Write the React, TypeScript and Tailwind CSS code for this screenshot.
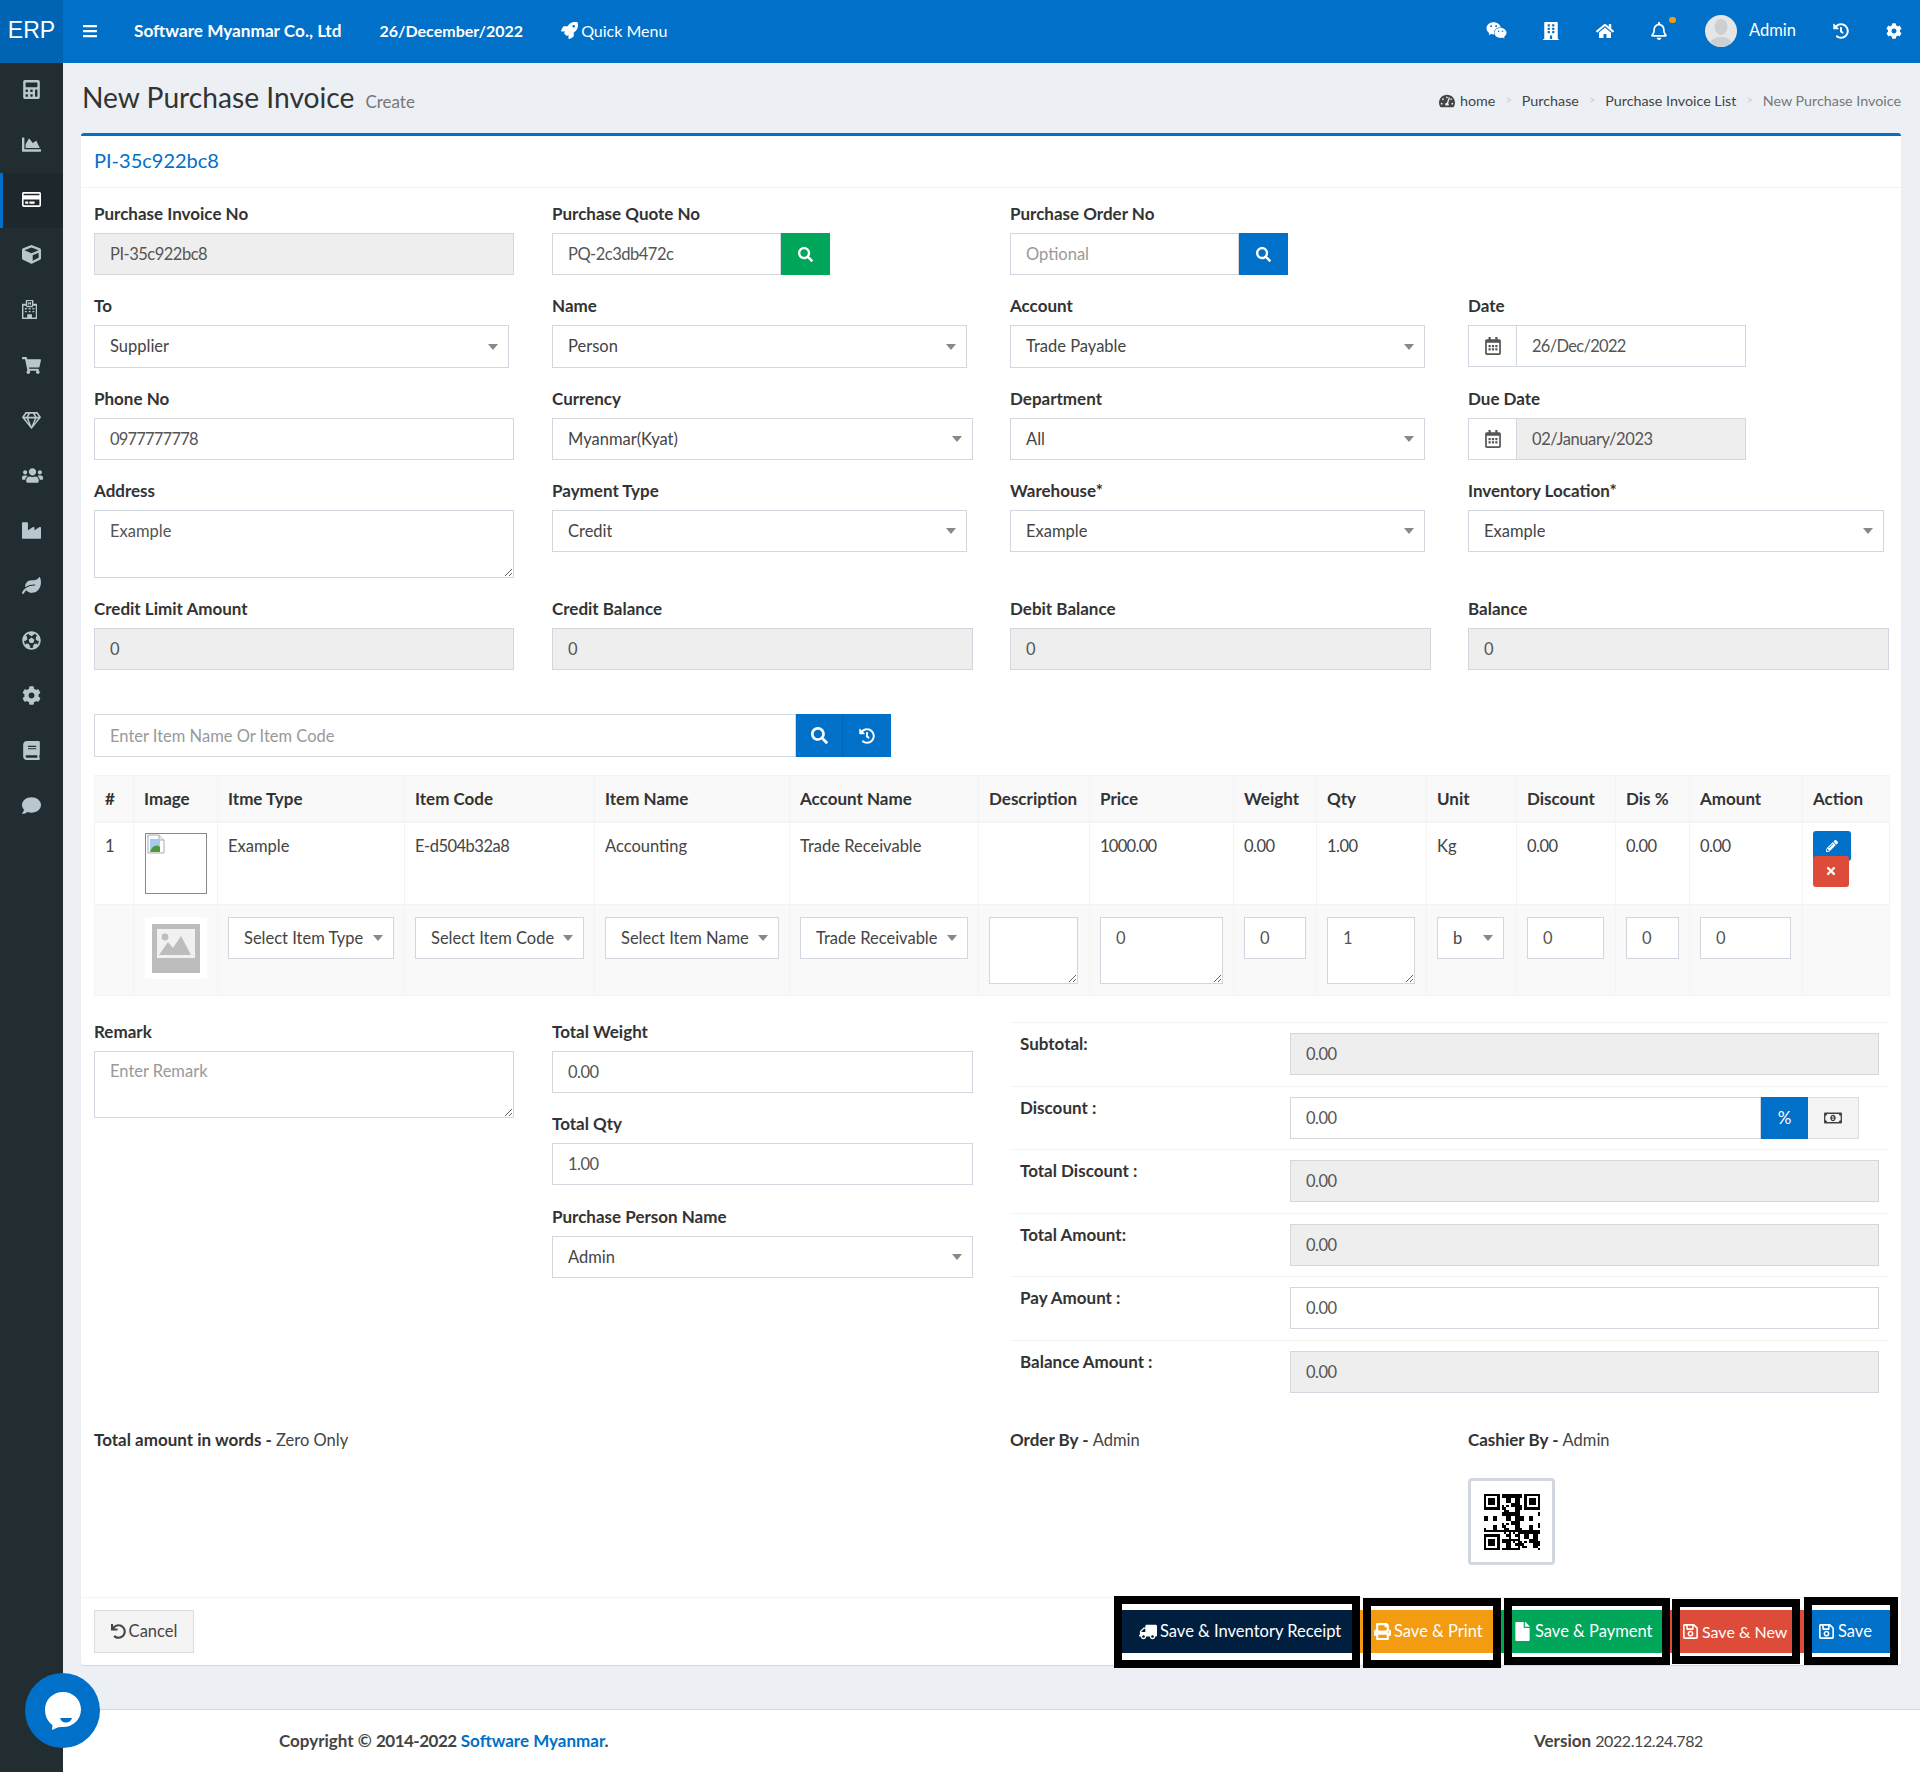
import type { ReactNode } from 'react';
import {
    FaBars, FaBook, FaBuilding, FaCalculator, FaChartArea, FaCog, FaComment, FaCube, FaFile, FaFutbol, FaHistory,
    FaHome, FaIndustry, FaLeaf, FaPencilAlt, FaPrint, FaRegBell, FaRegCalendarAlt, FaRegCreditCard, FaRegGem,
    FaRegMoneyBillAlt, FaRegSave, FaRocket, FaSearch, FaShoppingCart, FaTachometerAlt, FaTimes, FaTruck, FaUndo, FaUsers, FaWeixin,
} from 'react-icons/fa';

function HospitalIcon({ size = 19 }: { size?: number }) {
    return (
        <svg viewBox="0 0 16 20" height={size} width={size * 0.8} fill="currentColor">
            <path d="M4 0h8v4h4v16H0V4h4zm1.500 1v5h5V1zM1.500 6v12.500h4V15h5v3.500h4V6h-3v1.500h-7V6z" fillRule="evenodd" />
            <path d="M6.500 2h1v1h1V2h1v3h-1V4h-1v1h-1z" />
            <path d="M3 8.500h2V10H3zm4 0h2V10H7zm4 0h2V10h-2zM3 11.500h2V13H3zm4 0h2V13H7zm4 0h2V13h-2z" />
        </svg>
    );
}

const sideIcons = [
    FaCalculator, FaChartArea, FaRegCreditCard, FaCube, HospitalIcon, FaShoppingCart, FaRegGem,
    FaUsers, FaIndustry, FaLeaf, FaFutbol, FaCog, FaBook, FaComment,
];

// digits in Lato run wider than the reference's face, pull numeric strings in a little
const tight = 'tracking-[-0.5px]';

function Label({ children }: { children: ReactNode }) {
    return <label className="mb-[8px] block h-[22px] text-[17px] font-bold leading-[22px] text-[#333]">{children}</label>;
}

function Input({ value, placeholder, gray, className = '' }: { value?: string; placeholder?: string; gray?: boolean; className?: string }) {
    return (
        <input
            readOnly
            value={value ?? ''}
            placeholder={placeholder}
            className={`block h-[42px] border border-[#d2d6de] px-[15px] text-[16.5px] text-[#555] outline-none placeholder:text-[#999] ${gray ? 'bg-[#eee]' : 'bg-white'} ${className}`}
        />
    );
}

function Area({ value, placeholder, className = '' }: { value?: string; placeholder?: string; className?: string }) {
    return (
        <textarea
            readOnly
            value={value ?? ''}
            placeholder={placeholder}
            className={`block border border-[#d2d6de] bg-white px-[15px] py-[9px] text-[16.5px] leading-[22px] text-[#555] outline-none placeholder:text-[#999] ${className}`}
        />
    );
}

function Select({ value, className = '' }: { value: string; className?: string }) {
    return (
        <div className={`flex h-[42px] items-center justify-between border border-[#d2d6de] bg-white pl-[15px] pr-[10px] text-[16.5px] text-[#444] ${className}`}>
            <span className="truncate">{value}</span>
            <span className="h-0 w-0 shrink-0 border-x-[5px] border-t-[6px] border-x-transparent border-t-[#888]" />
        </div>
    );
}

function DateField({ value, gray, className = '' }: { value: string; gray?: boolean; className?: string }) {
    return (
        <div className="flex h-[42px] w-[278px]">
            <span className="flex w-[48px] items-center justify-center border border-r-0 border-[#d2d6de] bg-white text-[#555]">
                <FaRegCalendarAlt size={18} />
            </span>
            <Input value={value} gray={gray} className={`min-w-0 flex-1 ${className}`} />
        </div>
    );
}

function Lookup({ value, placeholder, color }: { value?: string; placeholder?: string; color: string }) {
    return (
        <div className="flex h-[42px] w-[278px]">
            <Input value={value} placeholder={placeholder} className={`min-w-0 flex-1 ${value ? tight : ''}`} />
            <button type="button" className={`flex w-[49px] items-center justify-center text-white ${color}`}>
                <FaSearch size={15} />
            </button>
        </div>
    );
}

function Th({ children }: { children?: ReactNode }) {
    return <th className="border border-[#f4f4f4] border-b-2 pl-[10px] text-left align-middle text-[17px] font-bold text-[#333]">{children}</th>;
}

function Td({ children, className = '' }: { children?: ReactNode; className?: string }) {
    return <td className={`border border-[#f4f4f4] pl-[10px] pt-[12px] align-top text-[16.5px] leading-[22px] text-[#444] ${className}`}>{children}</td>;
}

function TotalRow({ label, children }: { label: string; children: ReactNode }) {
    return (
        <div className="flex h-[63.5px] border-t border-[#f4f4f4] pl-[10px] pt-[10px]">
            <div className="w-[270px] text-[17px] font-bold leading-[22px] text-[#333]">{label}</div>
            {children}
        </div>
    );
}

const qrCells = Array.from({ length: 25 * 25 }, (_, i) => {
    const x = i % 25;
    const y = Math.floor(i / 25);
    const inFinder = (fx: number, fy: number) => x >= fx && x < fx + 7 && y >= fy && y < fy + 7;
    for (const [fx, fy] of [[0, 0], [18, 0], [0, 18]]) {
        if (inFinder(fx, fy)) {
            const dx = x - fx;
            const dy = y - fy;
            return dx === 0 || dy === 0 || dx === 6 || dy === 6 || (dx >= 2 && dx <= 4 && dy >= 2 && dy <= 4);
        }
    }
    if ((x < 8 && y < 8) || (x > 16 && y < 8) || (x < 8 && y > 16)) return false;
    return ((x * 7 + y * 13 + x * y * 5 + (x ^ y) * 3) % 5) < 2;
});

function QrCode() {
    return (
        <svg viewBox="0 0 25 25" className="h-[56px] w-[56px]" shapeRendering="crispEdges">
            {qrCells.map((on, i) => (on ? <rect key={i} x={i % 25} y={Math.floor(i / 25)} width="1" height="1" fill="#000" /> : null))}
        </svg>
    );
}

function SaveBox({ icon, label, boxClass, fill, strip }: { icon: ReactNode; label: string; boxClass: string; fill: string; strip?: string }) {
    return (
        <>
            {strip ? <span className={`mt-[12px] h-[43px] ${strip}`} /> : null}
            <div className={`border-[8px] border-black bg-white ${boxClass}`}>
                <button type="button" className={`flex h-[43px] w-full items-center justify-start gap-[3px] whitespace-nowrap text-[16.5px] text-white ${fill}`}>
                    {icon}
                    {label}
                </button>
            </div>
        </>
    );
}

export default function App() {
    return (
        <div className="relative flex min-h-[1772px] w-[1920px] flex-col overflow-hidden bg-[#ecf0f5] font-[Lato,sans-serif] text-[16px] text-[#333]">
            <header className="flex h-[63px] shrink-0 bg-[#0070c9] text-white">
                <div className="flex h-full w-[63px] items-center justify-center bg-[#0064b4] pb-[3px] font-['Liberation_Sans',sans-serif] text-[23px]">ERP</div>
                <div className="flex flex-1 items-center pb-[2px]">
                    <FaBars size={16} className="ml-[19px]" />
                    <span className="ml-[36px] text-[17.2px] font-bold">Software Myanmar Co., Ltd</span>
                    <span className="ml-[38px] font-bold">26/December/2022</span>
                    <FaRocket size={17} className="ml-[38px]" />
                    <span className="ml-[3px]">Quick Menu</span>
                    <div className="ml-auto flex items-center pr-[18px]">
                        <FaWeixin size={21} />
                        <FaBuilding size={18} className="ml-[35px]" />
                        <FaHome size={18} className="ml-[36px]" />
                        <span className="relative ml-[36px]">
                            <FaRegBell size={18} />
                            <span className="absolute left-[19px] top-[-5px] h-[6px] w-[7px] rounded-full bg-[#f39c12]" />
                        </span>
                        <span className="ml-[37px] h-[32px] w-[32px] overflow-hidden rounded-full bg-[#e4e6e8]">
                            <svg viewBox="0 0 32 32" className="h-full w-full" fill="#cdd0d3">
                                <ellipse cx="16" cy="12" rx="6.500" ry="8" />
                                <path d="M4 32c0-7 6-9 9-10h6c3 1 9 3 9 10z" />
                            </svg>
                        </span>
                        <span className="ml-[12px] text-[16.5px]">Admin</span>
                        <FaHistory size={16} className="ml-[37px]" />
                        <FaCog size={16} className="ml-[37px]" />
                    </div>
                </div>
            </header>

            <div className="flex flex-1">
                <aside className="w-[63px] shrink-0 bg-[#222d32]">
                    {sideIcons.map((Icon, i) => (
                        <div
                            key={i}
                            className={`flex h-[55.1px] items-center pb-[2px] ${i === 2 ? 'border-l-[3px] border-[#0070c9] bg-[#1e282c] pl-[19px] text-white' : 'pl-[22px] text-[#b8c7ce]'}`}
                        >
                            <Icon size={i === 7 ? 21 : 19} />
                        </div>
                    ))}
                </aside>

                <div className="flex min-w-0 flex-1 flex-col">
                    <main className="flex-1 pl-[18px] pr-[19px]">
                        <div className="flex h-[70px] items-center">
                            <h1 className="pb-[2px] pl-[1px] text-[28.2px] leading-none text-[#333]">New Purchase Invoice</h1>
                            <span className="ml-[11px] mt-[7px] text-[17px] text-[#777]">Create</span>
                            <nav className="ml-auto mt-[5px] flex items-center text-[14.3px] text-[#444]">
                                <FaTachometerAlt size={16} className="mr-[5px]" />
                                <span>home</span>
                                <span className="mx-[10px] text-[11px] text-[#ccc]">&gt;</span>
                                <span>Purchase</span>
                                <span className="mx-[10px] text-[11px] text-[#ccc]">&gt;</span>
                                <span>Purchase Invoice List</span>
                                <span className="mx-[10px] text-[11px] text-[#ccc]">&gt;</span>
                                <span className="text-[#777]">New Purchase Invoice</span>
                            </nav>
                        </div>

                        <section className="flex h-[1532px] flex-col rounded-[3px] border-t-[3px] border-[#0070c9] bg-white shadow-[0_1px_1px_rgba(0,0,0,0.1)]">
                            <div className="flex h-[52px] shrink-0 items-center border-b border-[#f4f4f4] pb-[3px] pl-[13px] text-[20px] text-[#0070c9]">PI-35c922bc8</div>

                            <div className="px-[13px] pt-[15px]">
                                <div className="grid grid-cols-[458px_458px_458px_auto] gap-y-[20px]">
                                    <div>
                                        <Label>Purchase Invoice No</Label>
                                        <Input value="PI-35c922bc8" gray className={`w-[420px] ${tight}`} />
                                    </div>
                                    <div>
                                        <Label>Purchase Quote No</Label>
                                        <Lookup value="PQ-2c3db472c" color="bg-[#00a65a]" />
                                    </div>
                                    <div className="col-span-2">
                                        <Label>Purchase Order No</Label>
                                        <Lookup placeholder="Optional" color="bg-[#0070c9]" />
                                    </div>

                                    <div>
                                        <Label>To</Label>
                                        <Select value="Supplier" className="h-[43px] w-[415px]" />
                                    </div>
                                    <div>
                                        <Label>Name</Label>
                                        <Select value="Person" className="h-[43px] w-[415px]" />
                                    </div>
                                    <div>
                                        <Label>Account</Label>
                                        <Select value="Trade Payable" className="h-[43px] w-[415px]" />
                                    </div>
                                    <div>
                                        <Label>Date</Label>
                                        <DateField value="26/Dec/2022" className="tracking-[-0.7px]" />
                                    </div>

                                    <div>
                                        <Label>Phone No</Label>
                                        <Input value="0977777778" className="w-[420px] tracking-[-0.8px]" />
                                    </div>
                                    <div>
                                        <Label>Currency</Label>
                                        <Select value="Myanmar(Kyat)" className="w-[421px]" />
                                    </div>
                                    <div>
                                        <Label>Department</Label>
                                        <Select value="All" className="w-[415px]" />
                                    </div>
                                    <div>
                                        <Label>Due Date</Label>
                                        <DateField value="02/January/2023" gray className="tracking-[-0.4px]" />
                                    </div>

                                    <div>
                                        <Label>Address</Label>
                                        <Area value="Example" className="h-[68px] w-[420px]" />
                                    </div>
                                    <div>
                                        <Label>Payment Type</Label>
                                        <Select value="Credit" className="w-[415px]" />
                                    </div>
                                    <div>
                                        <Label>Warehouse*</Label>
                                        <Select value="Example" className="w-[415px]" />
                                    </div>
                                    <div>
                                        <Label>Inventory Location*</Label>
                                        <Select value="Example" className="w-[416px]" />
                                    </div>

                                    <div>
                                        <Label>Credit Limit Amount</Label>
                                        <Input value="0" gray className="w-[420px]" />
                                    </div>
                                    <div>
                                        <Label>Credit Balance</Label>
                                        <Input value="0" gray className="w-[421px]" />
                                    </div>
                                    <div>
                                        <Label>Debit Balance</Label>
                                        <Input value="0" gray className="w-[421px]" />
                                    </div>
                                    <div>
                                        <Label>Balance</Label>
                                        <Input value="0" gray className="w-[421px]" />
                                    </div>
                                </div>

                                <div className="mt-[44px] flex h-[43px] w-[797px]">
                                    <Input placeholder="Enter Item Name Or Item Code" className="h-[43px] w-[702px]" />
                                    <button type="button" className="flex w-[47px] items-center justify-center border-r border-[#0064b4] bg-[#0070c9] text-white">
                                        <FaSearch size={17} />
                                    </button>
                                    <button type="button" className="flex w-[48px] items-center justify-center bg-[#0070c9] text-white">
                                        <FaHistory size={16} />
                                    </button>
                                </div>

                                <table className="mt-[18px] w-[1795px] table-fixed">
                                    <colgroup>
                                        <col className="w-[39px]" />
                                        <col className="w-[84px]" />
                                        <col className="w-[187px]" />
                                        <col className="w-[190px]" />
                                        <col className="w-[195px]" />
                                        <col className="w-[189px]" />
                                        <col className="w-[111px]" />
                                        <col className="w-[144px]" />
                                        <col className="w-[83px]" />
                                        <col className="w-[110px]" />
                                        <col className="w-[90px]" />
                                        <col className="w-[99px]" />
                                        <col className="w-[74px]" />
                                        <col className="w-[113px]" />
                                        <col className="w-[87px]" />
                                    </colgroup>
                                    <thead>
                                        <tr className="h-[46px] bg-[#f9f9f9]">
                                            <Th>#</Th>
                                            <Th>Image</Th>
                                            <Th>Itme Type</Th>
                                            <Th>Item Code</Th>
                                            <Th>Item Name</Th>
                                            <Th>Account Name</Th>
                                            <Th>Description</Th>
                                            <Th>Price</Th>
                                            <Th>Weight</Th>
                                            <Th>Qty</Th>
                                            <Th>Unit</Th>
                                            <Th>Discount</Th>
                                            <Th>Dis %</Th>
                                            <Th>Amount</Th>
                                            <Th>Action</Th>
                                        </tr>
                                    </thead>
                                    <tbody>
                                        <tr className="h-[83px]">
                                            <Td>1</Td>
                                            <td className="border border-[#f4f4f4] pl-[11px] pt-[10px] align-top">
                                                <div className="h-[61px] w-[62px] border border-[#888]">
                                                    <svg viewBox="0 0 20 20" className="h-[20px] w-[20px]">
                                                        <path d="M2 1h11l5 5v13H2z" fill="#fff" stroke="#aaa" />
                                                        <path d="M13 1v5h5" fill="#eee" stroke="#aaa" />
                                                        <rect x="4" y="5" width="10" height="13" fill="#a8c8ee" />
                                                        <path d="M4 18c2-6 6-8 10-5v5z" fill="#4e9a3a" />
                                                    </svg>
                                                </div>
                                            </td>
                                            <Td>Example</Td>
                                            <Td className={tight}>E-d504b32a8</Td>
                                            <Td>Accounting</Td>
                                            <Td>Trade Receivable</Td>
                                            <Td />
                                            <Td className="tracking-[-0.7px]">1000.00</Td>
                                            <Td className={tight}>0.00</Td>
                                            <Td className={tight}>1.00</Td>
                                            <Td>Kg</Td>
                                            <Td className={tight}>0.00</Td>
                                            <Td className={tight}>0.00</Td>
                                            <Td className={tight}>0.00</Td>
                                            <td className="border border-[#f4f4f4] pl-[10px] pt-[8px] align-top">
                                                <button type="button" className="flex h-[30px] w-[38px] items-center justify-center rounded-[3px] bg-[#0070c9] text-white">
                                                    <FaPencilAlt size={12} />
                                                </button>
                                                <button type="button" className="relative -mt-[5px] flex h-[31px] w-[36px] items-center justify-center rounded-[3px] bg-[#dd4b39] text-white">
                                                    <FaTimes size={12} />
                                                </button>
                                            </td>
                                        </tr>
                                        <tr className="h-[91px] bg-[#f9f9f9]">
                                            <Td />
                                            <Td>
                                                <div className="ml-[1px] flex h-[62px] w-[62px] items-center justify-center bg-white">
                                                    <svg viewBox="0 0 48 49" className="h-[49px] w-[48px]">
                                                        <rect width="48" height="49" fill="#bdbdbd" />
                                                        <rect x="5" y="5" width="38" height="29" fill="#f1f1f1" />
                                                        <circle cx="13" cy="13" r="3.400" fill="#bdbdbd" />
                                                        <path d="M7 31l9-13 5 6 8-12 10 19z" fill="#bdbdbd" />
                                                    </svg>
                                                </div>
                                            </Td>
                                            <Td><Select value="Select Item Type" className="w-[166px]" /></Td>
                                            <Td><Select value="Select Item Code" className="w-[169px]" /></Td>
                                            <Td><Select value="Select Item Name" className="w-[174px]" /></Td>
                                            <Td><Select value="Trade Receivable" className="w-[168px]" /></Td>
                                            <Td><Area className="h-[67px] w-[89px]" /></Td>
                                            <Td><Area value="0" className="h-[67px] w-[123px]" /></Td>
                                            <Td><Input value="0" className="w-[62px]" /></Td>
                                            <Td><Area value="1" className="h-[67px] w-[88px]" /></Td>
                                            <Td><Select value="b" className="w-[67px]" /></Td>
                                            <Td><Input value="0" className="w-[77px]" /></Td>
                                            <Td><Input value="0" className="w-[53px]" /></Td>
                                            <Td><Input value="0" className="w-[91px]" /></Td>
                                            <Td />
                                        </tr>
                                    </tbody>
                                </table>

                                <div className="mt-[25px] grid grid-cols-[458px_458px_879px]">
                                    <div>
                                        <Label>Remark</Label>
                                        <Area placeholder="Enter Remark" className="h-[67px] w-[420px] !py-[8px]" />
                                    </div>
                                    <div>
                                        <Label>Total Weight</Label>
                                        <Input value="0.00" className={`w-[421px] ${tight}`} />
                                        <div className="mt-[20px]">
                                            <Label>Total Qty</Label>
                                            <Input value="1.00" className={`w-[421px] ${tight}`} />
                                        </div>
                                        <div className="mt-[21px]">
                                            <Label>Purchase Person Name</Label>
                                            <Select value="Admin" className="w-[421px]" />
                                        </div>
                                    </div>
                                    <div className="pt-[1px]">
                                        <TotalRow label="Subtotal:"><Input value="0.00" gray className={`w-[589px] ${tight}`} /></TotalRow>
                                        <TotalRow label="Discount :">
                                            <div className="flex h-[42px] w-[569px]">
                                                <Input value="0.00" className={`w-[471px] ${tight}`} />
                                                <span className="flex w-[47px] items-center justify-center bg-[#0070c9] text-[17px] text-white">%</span>
                                                <span className="flex w-[51px] items-center justify-center border border-l-0 border-[#ddd] bg-[#f4f4f4] text-[#444]">
                                                    <FaRegMoneyBillAlt size={18} />
                                                </span>
                                            </div>
                                        </TotalRow>
                                        <TotalRow label="Total Discount :"><Input value="0.00" gray className={`w-[589px] ${tight}`} /></TotalRow>
                                        <TotalRow label="Total Amount:"><Input value="0.00" gray className={`w-[589px] ${tight}`} /></TotalRow>
                                        <TotalRow label="Pay Amount :"><Input value="0.00" className={`w-[589px] ${tight}`} /></TotalRow>
                                        <TotalRow label="Balance Amount :"><Input value="0.00" gray className={`w-[589px] ${tight}`} /></TotalRow>
                                    </div>
                                </div>

                                <div className="mt-[26px] grid grid-cols-[916px_458px_auto] text-[16.5px] leading-[22px]">
                                    <div><b className="text-[17px]">Total amount in words - </b><span className="text-[#444]">Zero Only</span></div>
                                    <div><b className="text-[17px]">Order By - </b><span className="text-[#444]">Admin</span></div>
                                    <div>
                                        <div><b className="text-[17px]">Cashier By - </b><span className="text-[#444]">Admin</span></div>
                                        <div className="mt-[27px] flex h-[87px] w-[87px] items-center justify-center rounded-[4px] border-[3px] border-[#d2d6de] bg-white">
                                            <QrCode />
                                        </div>
                                    </div>
                                </div>
                            </div>

                            <div className="mt-auto flex h-[68px] shrink-0 items-start border-t border-[#f4f4f4] pl-[13px] pr-[3px]">
                                <button type="button" className="mt-[12px] flex h-[43px] w-[100px] items-center justify-center gap-[3px] border border-[#ddd] bg-[#f4f4f4] text-[16.5px] text-[#444]">
                                    <FaUndo size={15} />
                                    Cancel
                                </button>
                                <div className="ml-auto flex items-start">
                                    <SaveBox
                                        icon={<FaTruck size={18} className="-scale-x-100" />}
                                        label="Save & Inventory Receipt"
                                        boxClass="-mt-[2px] w-[246px] pb-[7px] pt-[6px]"
                                        fill="bg-[#001f3f] pl-[17px]"
                                    />
                                    <SaveBox
                                        icon={<FaPrint size={17} />}
                                        label="Save & Print"
                                        boxClass="w-[138px] pb-[7px] pt-[4px]"
                                        fill="bg-[#f39c12] pl-[3px]"
                                        strip="w-[3px] bg-[#f39c12]"
                                    />
                                    <SaveBox
                                        icon={<FaFile size={19} />}
                                        label="Save & Payment"
                                        boxClass="w-[166px] pb-[4px] pt-[4px]"
                                        fill="bg-[#00a65a] pl-[1px]"
                                        strip="w-[3px] bg-[#00a65a]"
                                    />
                                    <SaveBox
                                        icon={<FaRegSave size={17} />}
                                        label="Save & New"
                                        boxClass="mt-[1px] w-[128px] pb-[3px] pt-[3px]"
                                        fill="bg-[#dd4b39] pl-[2px] text-[16px]"
                                        strip="w-[2px] bg-[#dd4b39]"
                                    />
                                    <SaveBox
                                        icon={<FaRegSave size={17} />}
                                        label="Save"
                                        boxClass="-mt-[1px] w-[94px] pb-[4px] pt-[5px]"
                                        fill="bg-[#0070c9] pl-[6px]"
                                        strip="w-[4px] bg-[#dd4b39]"
                                    />
                                </div>
                            </div>
                        </section>
                    </main>

                    <footer className="mt-[44px] flex h-[63px] items-center border-t border-[#d2d6de] bg-white text-[17px] font-bold text-[#444]">
                        <span className="ml-[216px]">
                            Copyright © <span className={tight}>2014-2022</span> <span className="text-[#0070c9]">Software Myanmar</span>.
                        </span>
                        <span className="ml-auto mr-[217px]">
                            Version <span className="text-[16px] font-normal tracking-[-0.4px]">2022.12.24.782</span>
                        </span>
                    </footer>
                </div>
            </div>

            <div className="absolute left-[25px] top-[1673px] flex h-[75px] w-[75px] items-center justify-center rounded-full bg-[#0070c9]">
                <svg viewBox="0 0 36 38" className="h-[38px] w-[36px]">
                    <path d="M18 0c10 0 18 7.500 18 17.500S28 35 18 35c-2 0-4-.3-6 .8L7 38l.5-5C3 30 0 24.500 0 17.500 0 7.500 8 0 18 0z" fill="#fff" />
                    <path d="M15 26h12c-1 3-3 4.500-6 4.500s-5-1.500-6-4.500z" fill="#0070c9" />
                </svg>
            </div>
        </div>
    );
}
